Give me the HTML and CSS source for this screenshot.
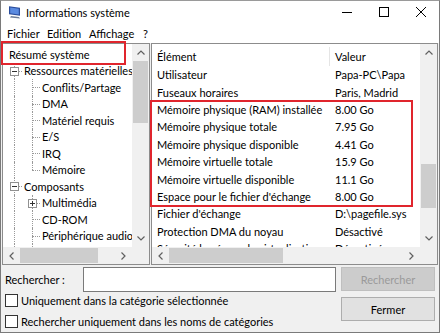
FILE: index.html
```html
<!DOCTYPE html>
<html lang="fr">
<head>
<meta charset="utf-8">
<link rel="stylesheet" href="styles.css">
</head>
<body>
<div class="window">
  <div class="titlebar">
    <svg class="appicon" width="14" height="14" viewBox="0 0 14 14">
      <rect x="1" y="1" width="11" height="8" fill="#2a4d9c" transform="skewY(8)"/>
      <rect x="2.2" y="2.3" width="8.6" height="5.6" fill="#5b8be0" transform="skewY(8)"/>
      <path d="M3 11 L11 12 L12 13.5 L2 12.5 Z" fill="#6f7f99"/>
    </svg>
    <span class="title">Informations système</span>
    <div class="controls">
      <span class="ctl"><svg width="10" height="10" viewBox="0 0 10 10"><line x1="0" y1="5.5" x2="10" y2="5.5" stroke="#000" stroke-width="1"/></svg></span>
      <span class="ctl"><svg width="10" height="10" viewBox="0 0 10 10"><rect x="0.5" y="0.5" width="9" height="9" fill="none" stroke="#000" stroke-width="1"/></svg></span>
      <span class="ctl"><svg width="10" height="10" viewBox="0 0 10 10"><path d="M0 0 L10 10 M10 0 L0 10" stroke="#000" stroke-width="1"/></svg></span>
    </div>
  </div>
  <div class="menubar">
    <span class="mi m1">Fichier</span>
    <span class="mi m2">Edition</span>
    <span class="mi m3">Affichage</span>
    <span class="mi">?</span>
  </div>
  <div class="main">
    <div class="pane left">
      <div class="content tree">
        <div class="row root"><span class="txt">Résumé système</span></div>
        <div class="row"><span class="ind v h"><span class="box minus"></span></span><span class="txt">Ressources matérielles</span></div>
        <div class="row"><span class="ind v"></span><span class="ind v h"></span><span class="txt">Conflits/Partage</span></div>
        <div class="row"><span class="ind v"></span><span class="ind v h"></span><span class="txt">DMA</span></div>
        <div class="row"><span class="ind v"></span><span class="ind v h"></span><span class="txt">Matériel requis</span></div>
        <div class="row"><span class="ind v"></span><span class="ind v h"></span><span class="txt">E/S</span></div>
        <div class="row"><span class="ind v"></span><span class="ind v h"></span><span class="txt">IRQ</span></div>
        <div class="row"><span class="ind v"></span><span class="ind up h"></span><span class="txt">Mémoire</span></div>
        <div class="row"><span class="ind v h"><span class="box minus"></span></span><span class="txt">Composants</span></div>
        <div class="row"><span class="ind v"></span><span class="ind v h"><span class="box plus"></span></span><span class="txt">Multimédia</span></div>
        <div class="row"><span class="ind v"></span><span class="ind v h"></span><span class="txt">CD-ROM</span></div>
        <div class="row"><span class="ind v"></span><span class="ind v h"></span><span class="txt">Périphérique audio</span></div>
        <div class="row"><span class="ind v"></span><span class="ind v h"></span><span class="txt">Affichage</span></div>
      </div>
      <div class="vscroll">
        <span class="arr"><svg width="8" height="5" viewBox="0 0 8 5"><polyline points="0.5,4.5 4,1 7.5,4.5" fill="none" stroke="#606060" stroke-width="1.2"/></svg></span>
        <div class="track"><div class="thumb vt-left"></div></div>
        <span class="arr"><svg width="8" height="5" viewBox="0 0 8 5"><polyline points="0.5,0.5 4,4 7.5,0.5" fill="none" stroke="#606060" stroke-width="1.2"/></svg></span>
      </div>
      <div class="hscroll">
        <span class="arr"><svg width="5" height="8" viewBox="0 0 5 8"><polyline points="4.5,0.5 1,4 4.5,7.5" fill="none" stroke="#606060" stroke-width="1.2"/></svg></span>
        <div class="track h"><div class="thumb ht-left"></div></div>
        <span class="arr"><svg width="5" height="8" viewBox="0 0 5 8"><polyline points="0.5,0.5 4,4 0.5,7.5" fill="none" stroke="#606060" stroke-width="1.2"/></svg></span>
      </div>
      <div class="corner"></div>
    </div>
    <div class="pane right">
      <div class="content list">
        <div class="lrow head"><span class="c1">Élément</span><span class="c2">Valeur</span></div>
        <div class="lrow"><span class="c1">Utilisateur</span><span class="c2">Papa-PC\Papa</span></div>
        <div class="lrow"><span class="c1">Fuseaux horaires</span><span class="c2">Paris, Madrid</span></div>
        <div class="lrow"><span class="c1">Mémoire physique (RAM) installée</span><span class="c2">8.00 Go</span></div>
        <div class="lrow"><span class="c1">Mémoire physique totale</span><span class="c2">7.95 Go</span></div>
        <div class="lrow"><span class="c1">Mémoire physique disponible</span><span class="c2">4.41 Go</span></div>
        <div class="lrow"><span class="c1">Mémoire virtuelle totale</span><span class="c2">15.9 Go</span></div>
        <div class="lrow"><span class="c1">Mémoire virtuelle disponible</span><span class="c2">11.1 Go</span></div>
        <div class="lrow"><span class="c1">Espace pour le fichier d'échange</span><span class="c2">8.00 Go</span></div>
        <div class="lrow"><span class="c1">Fichier d'échange</span><span class="c2">D:\pagefile.sys</span></div>
        <div class="lrow"><span class="c1">Protection DMA du noyau</span><span class="c2">Désactivé</span></div>
        <div class="lrow"><span class="c1">Sécurité basée sur la virtualisation</span><span class="c2">Désactivé</span></div>
      </div>
      <div class="vscroll">
        <span class="arr"><svg width="8" height="5" viewBox="0 0 8 5"><polyline points="0.5,4.5 4,1 7.5,4.5" fill="none" stroke="#606060" stroke-width="1.2"/></svg></span>
        <div class="track"><div class="thumb vt-right"></div></div>
        <span class="arr"><svg width="8" height="5" viewBox="0 0 8 5"><polyline points="0.5,0.5 4,4 7.5,0.5" fill="none" stroke="#606060" stroke-width="1.2"/></svg></span>
      </div>
      <div class="hscroll">
        <span class="arr"><svg width="5" height="8" viewBox="0 0 5 8"><polyline points="4.5,0.5 1,4 4.5,7.5" fill="none" stroke="#606060" stroke-width="1.2"/></svg></span>
        <div class="track h"><div class="thumb ht-right"></div></div>
        <span class="arr"><svg width="5" height="8" viewBox="0 0 5 8"><polyline points="0.5,0.5 4,4 0.5,7.5" fill="none" stroke="#606060" stroke-width="1.2"/></svg></span>
      </div>
      <div class="corner"></div>
    </div>
  </div>
  <div class="bottom">
    <div class="search">
      <span class="label">Rechercher :</span>
      <span class="input"></span>
    </div>
    <span class="btn disabled">Rechercher</span>
    <div class="checks">
      <div class="check"><span class="cb"></span><span>Uniquement dans la catégorie sélectionnée</span></div>
      <div class="check"><span class="cb"></span><span>Rechercher uniquement dans les noms de catégories</span></div>
    </div>
    <span class="btn close">Fermer</span>
  </div>
  <div class="mark mark-left"></div>
  <div class="mark mark-right"></div>
</div>
</body>
</html>
```

FILE: styles.css
```css
* { box-sizing: border-box; }
html, body { margin: 0; padding: 0; }
body {
  width: 440px;
  height: 333px;
  overflow: hidden;
  font-family: Lato, "Noto Sans", sans-serif;
  font-size: 11px;
  color: #000;
  background: #fff;
}
.window {
  position: relative;
  width: 440px;
  height: 333px;
  border: 1px solid #7a7a7a;
  border-top: 1px solid #9a9a9a;
  background: #f0f0f0;
  display: flex;
  flex-direction: column;
}
.titlebar {
  height: 22px;
  background: #fff;
  display: flex;
  align-items: center;
  padding-left: 7px;
}
.appicon { margin-right: 4px; flex: none; }
.title { flex: 1; font-size: 11px; }
.controls { display: flex; height: 100%; }
.ctl {
  width: 37px;
  display: flex;
  align-items: center;
  justify-content: center;
}
.menubar {
  height: 20px;
  background: #fff;
  display: flex;
  align-items: center;
  padding-left: 6px;
}
.mi { display: inline-block; flex: none; }
.m1 { width: 40px; }
.m2 { width: 42px; }
.m3 { width: 54px; }
.main {
  display: flex;
  gap: 1px;
  padding: 0 1px 0 1px;
  height: 222px;
  flex: none;
}
.pane {
  background: #fff;
  border: 1px solid #8c8c8c;
  display: grid;
  grid-template-columns: 1fr 17px;
  grid-template-rows: 1fr 17px;
  overflow: hidden;
}
.pane.left { width: 148px; }
.pane.right { flex: 1; }
.content { overflow: hidden; min-width: 0; }
.tree { padding: 2px 0 0 2px; }
.row {
  height: 16.5px;
  display: flex;
  align-items: center;
  white-space: nowrap;
}
.row.root { padding-left: 3px; }
.txt { padding-left: 1px; }
.ind {
  position: relative;
  width: 18px;
  height: 100%;
  flex: none;
}
.ind.v::before, .ind.up::before {
  content: "";
  position: absolute;
  left: 9px;
  top: 0;
  bottom: 0;
  border-left: 1px dotted #9a9a9a;
}
.ind.up::before { bottom: 50%; }
.ind.h::after {
  content: "";
  position: absolute;
  left: 9px;
  right: 1px;
  top: 50%;
  border-top: 1px dotted #9a9a9a;
}
.box {
  position: absolute;
  left: 5px;
  top: 4px;
  width: 9px;
  height: 9px;
  background: #fff;
  border: 1px solid #919191;
  z-index: 1;
}
.box::before {
  content: "";
  position: absolute;
  left: 1px;
  right: 1px;
  top: 3px;
  border-top: 1px solid #333;
}
.box.plus::after {
  content: "";
  position: absolute;
  top: 1px;
  bottom: 1px;
  left: 3px;
  border-left: 1px solid #333;
}
.vscroll {
  background: #f0f0f0;
  display: flex;
  flex-direction: column;
}
.hscroll {
  background: #f0f0f0;
  display: flex;
}
.corner { background: #f0f0f0; }
.arr {
  width: 17px;
  height: 17px;
  flex: none;
  display: flex;
  align-items: center;
  justify-content: center;
}
.track { flex: 1; position: relative; }
.thumb { background: #cdcdcd; }
.vt-left { margin: 0 1px; height: 62px; }
.vt-right { margin: 103px 1px 0; height: 44px; }
.ht-left { margin: 1px 0; width: 78px; height: 15px; }
.ht-right { margin: 1px 0; width: 114px; height: 15px; }
.list { display: flex; flex-direction: column; }
.lrow {
  display: flex;
  height: 17.4px;
  align-items: center;
  white-space: nowrap;
  flex: none;
}
.lrow.head { height: 22px; padding-top: 3px; }
.c1 {
  width: 178px;
  padding-left: 5px;
  overflow: hidden;
  flex: none;
}
.c2 { padding-left: 5px; }
.head .c1 { border-right: 1px solid #e5e5e5; height: 100%; display: flex; align-items: center; }
.bottom {
  flex: 1;
  display: grid;
  grid-template-columns: 331px 94px;
  grid-template-rows: 25px auto;
  column-gap: 5px;
  row-gap: 1px;
  padding: 2px 0 0 4px;
}
.search { display: flex; align-items: center; }
.label { width: 78px; }
.input {
  flex: 1;
  height: 25px;
  background: #fff;
  border: 1px solid #7a7a7a;
}
.btn {
  display: flex;
  align-items: center;
  justify-content: center;
  height: 24px;
}
.btn.disabled {
  background: #cccccc;
  border: 1px solid #bfbfbf;
  color: #9a9a9a;
}
.btn.close {
  background: #e1e1e1;
  border: 1px solid #adadad;
  margin-top: 4px;
}
.checks { display: flex; flex-direction: column; gap: 7px; }
.check {
  display: flex;
  align-items: center;
  height: 14px;
  white-space: nowrap;
}
.cb {
  width: 13px;
  height: 13px;
  border: 1px solid #333;
  background: #fff;
  margin-right: 3px;
  flex: none;
}
.mark {
  position: absolute;
  border: 2px solid #e0252d;
  pointer-events: none;
}
.mark-left { left: 0px; top: 40px; width: 125px; height: 24px; }
.mark-right { left: 149px; top: 99px; width: 263px; height: 107px; }
```
